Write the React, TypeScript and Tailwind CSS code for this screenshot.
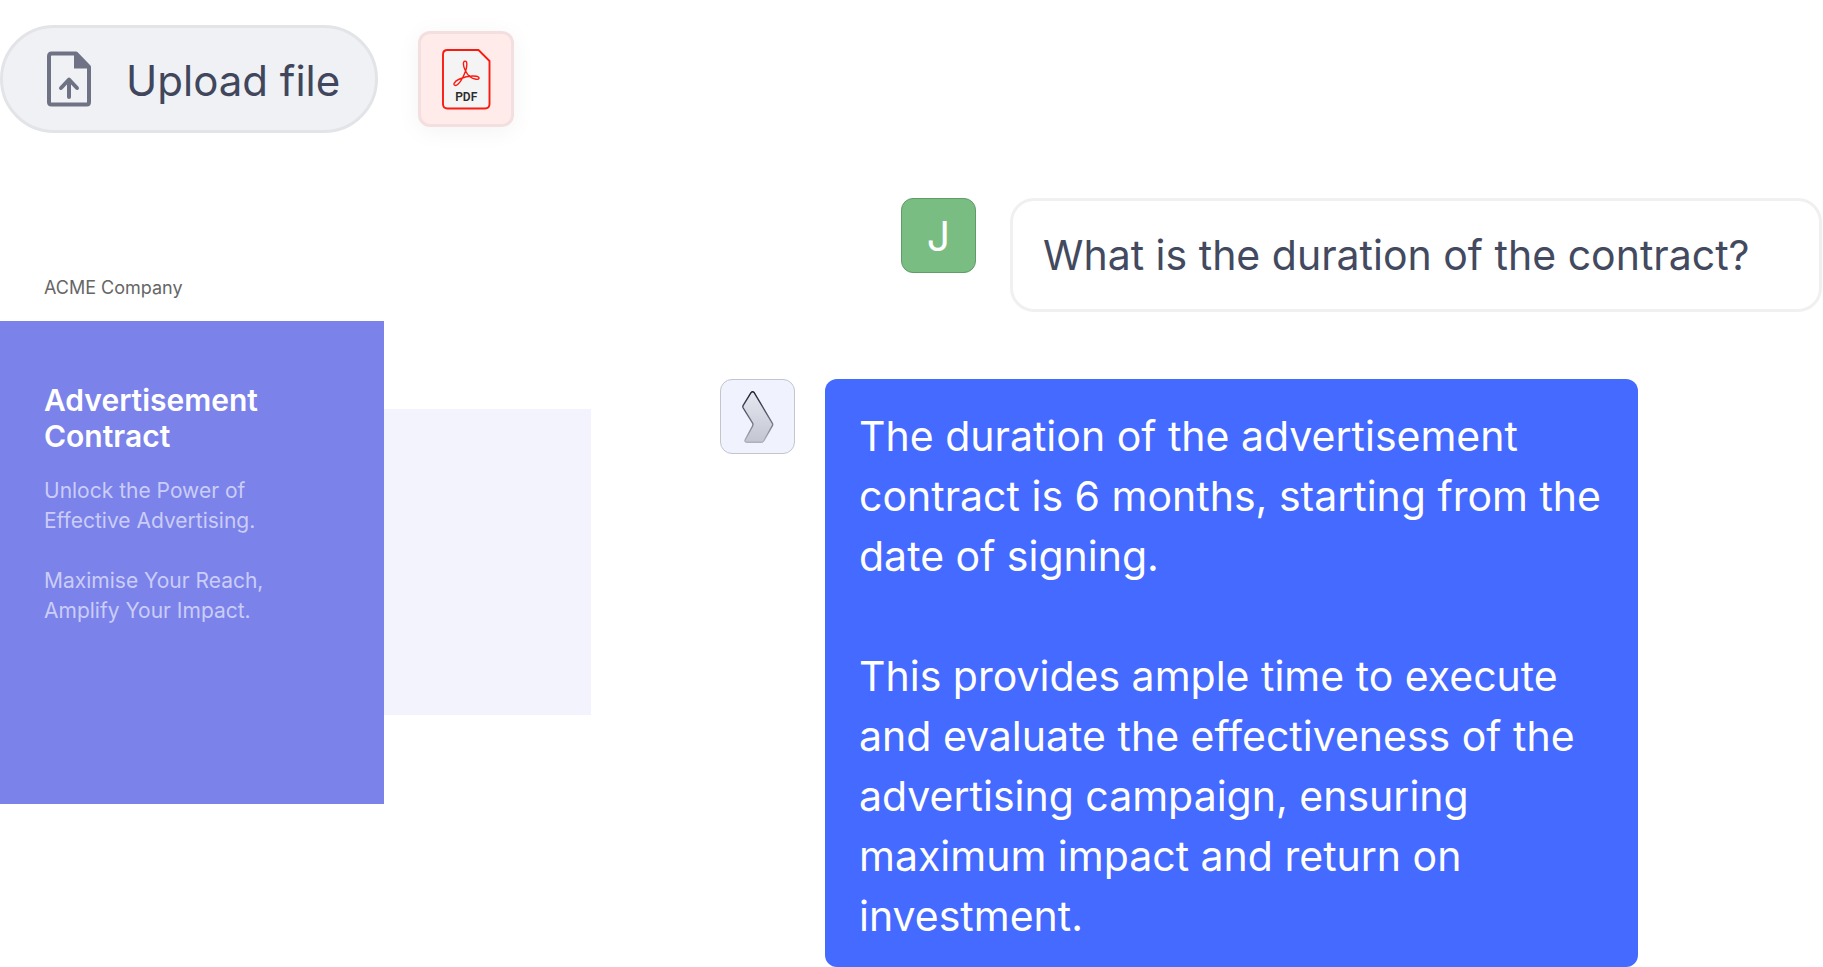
import type { ReactNode } from "react";

function UploadFileIcon() {
  return (
    <svg viewBox="0 0 44 56" className="h-14 w-11 shrink-0" fill="none" aria-hidden="true">
      <path
        d="M2 5.2Q2 2.5 4.7 2.5H29L42 16V51.3Q42 53.5 39.8 53.5H4.7Q2 53.5 2 51.3Z"
        stroke="#6f7285"
        strokeWidth="4"
        strokeLinejoin="round"
      />
      <path d="M27 1V17.5H43.5Z" fill="#6f7285" />
      <path
        d="M22 46V29M14 37L22 28.5L30 37"
        stroke="#6f7285"
        strokeWidth="4"
        strokeLinecap="round"
        strokeLinejoin="round"
      />
    </svg>
  );
}

function PdfIcon() {
  return (
    <svg viewBox="0 0 50 62" className="h-[62px] w-[50px]" role="img" aria-label="PDF document">
      <path
        d="M6.5 2H37.500L48.500 13V56Q48.500 60.500 44 60.500H6.500Q2 60.500 2 56V6.500Q2 2 6.500 2Z"
        fill="#f4f4f4"
        stroke="#fa1b10"
        strokeWidth="1.900"
      />
      <path
        d="M24.300 22.500C21.800 17.500 21.900 13.300 24 13.100C26.600 12.900 26.100 18.500 24.600 23C22.300 29.500 17.800 37.200 14.500 37.500C11.500 37.500 12.800 33.300 18.500 31C24.500 28.400 31.500 27.600 35.500 28.300C39.500 29.200 38.400 31.700 35 31.300C30.500 30.700 26.400 27 24.300 22.500Z"
        fill="none"
        stroke="#fa1b10"
        strokeWidth="1.400"
      />
      <text
        x="25.200"
        y="52.500"
        textAnchor="middle"
        fill="#2c2c2c"
        className="font-['Liberation_Sans_Narrow','Roboto',sans-serif] text-[12px] font-semibold"
      >
        PDF
      </text>
    </svg>
  );
}

function AssistantIcon() {
  return (
    <svg viewBox="0 0 32 52" className="h-[52px] w-8" fill="none" aria-hidden="true">
      <defs>
        <linearGradient id="mark-fill" x1="0" y1="0" x2="0" y2="1">
          <stop offset="0" stopColor="#e6e8f1" />
          <stop offset="1" stopColor="#c3c5d1" />
        </linearGradient>
        <linearGradient id="mark-stroke" x1="0" y1="0" x2="0" y2="1">
          <stop offset="0" stopColor="#1a1b2b" />
          <stop offset="1" stopColor="#b0b1bf" />
        </linearGradient>
      </defs>
      <path
        d="M9 1.600Q10.500 -0.200 12.200 1.600L30.400 32.300Q31 33.500 30.400 34.600L22 49.500Q21.100 51.200 19.300 51.200H4.600Q2.300 51 3.200 48.700L10.600 35Q11.300 33.500 10.600 32.200L1.200 17Q0.500 15.700 1.200 14.400Z"
        fill="url(#mark-fill)"
        stroke="url(#mark-stroke)"
        strokeWidth="1.400"
      />
    </svg>
  );
}

function Avatar({ className, children }: { className: string; children: ReactNode }) {
  return (
    <div
      className={`flex size-[75px] shrink-0 items-center justify-center rounded-xl border ${className}`}
    >
      {children}
    </div>
  );
}

export default function App() {
  return (
    <main className="flex min-h-screen items-start justify-between bg-white font-[Inter,sans-serif]">
      <section className="w-[591px] shrink-0 pt-[25px]">
        <div className="flex items-center gap-10">
          <button
            type="button"
            className="flex h-[108px] items-center gap-[35px] rounded-full border-3 border-[#e3e4e8] bg-[#f0f1f4] pr-[35px] pl-11 text-[42px] leading-[60px] text-[#40465c]"
          >
            <UploadFileIcon />
            <span className="pt-1">Upload file</span>
          </button>
          <div className="flex size-24 items-center justify-center rounded-xl border-3 border-[#f3dfe0] bg-[#ffebea] shadow-[0_4px_24px_rgba(0,0,0,0.05)]">
            <PdfIcon />
          </div>
        </div>

        <article className="mt-[141px]">
          <p className="px-11 pb-[19px] text-[18px] leading-7 text-[#666666]">ACME Company</p>
          <div className="flex items-start">
            <div className="h-[483px] w-96 bg-[#7b82ea] px-11 pt-[61px]">
              <h1 className="text-[30px] leading-9 font-semibold text-white">
                Advertisement
                <br />
                Contract
              </h1>
              <p className="mt-[22px] text-[21px] leading-[30px] text-[#cacdf7]">
                Unlock the Power of
                <br />
                Effective Advertising.
              </p>
              <p className="mt-[30px] text-[21px] leading-[30px] text-[#cacdf7]">
                Maximise Your Reach,
                <br />
                Amplify Your Impact.
              </p>
            </div>
            <div className="mt-[88px] h-[306px] flex-1 bg-[#f2f3fd]" />
          </div>
        </article>
      </section>

      <section className="flex flex-col gap-[67px] pt-[198px] text-[41px] leading-[60px]">
        <div className="flex justify-end gap-[34px] pr-px">
          <Avatar className="border-[#5f9c68] bg-[#7abd82] text-white">J</Avatar>
          <p className="w-[812px] rounded-3xl border-3 border-[#f0f0f0] px-[30px] py-6 text-[#434a60]">
            What is the duration of the contract?
          </p>
        </div>
        <div className="flex gap-[30px] pr-[185px]">
          <Avatar className="border-[#c3c4cc] bg-[#f0f3fe]">
            <AssistantIcon />
          </Avatar>
          <div className="w-[813px] rounded-xl bg-[#456aff] pt-[27px] pr-6 pb-[21px] pl-[34px] text-white">
            <p>
              The duration of the advertisement contract is 6 months, starting from the date of
              signing.
            </p>
            <p className="mt-[60px]">
              This provides ample time to execute and evaluate the effectiveness of the advertising
              campaign, ensuring maximum impact and return on investment.
            </p>
          </div>
        </div>
      </section>
    </main>
  );
}
